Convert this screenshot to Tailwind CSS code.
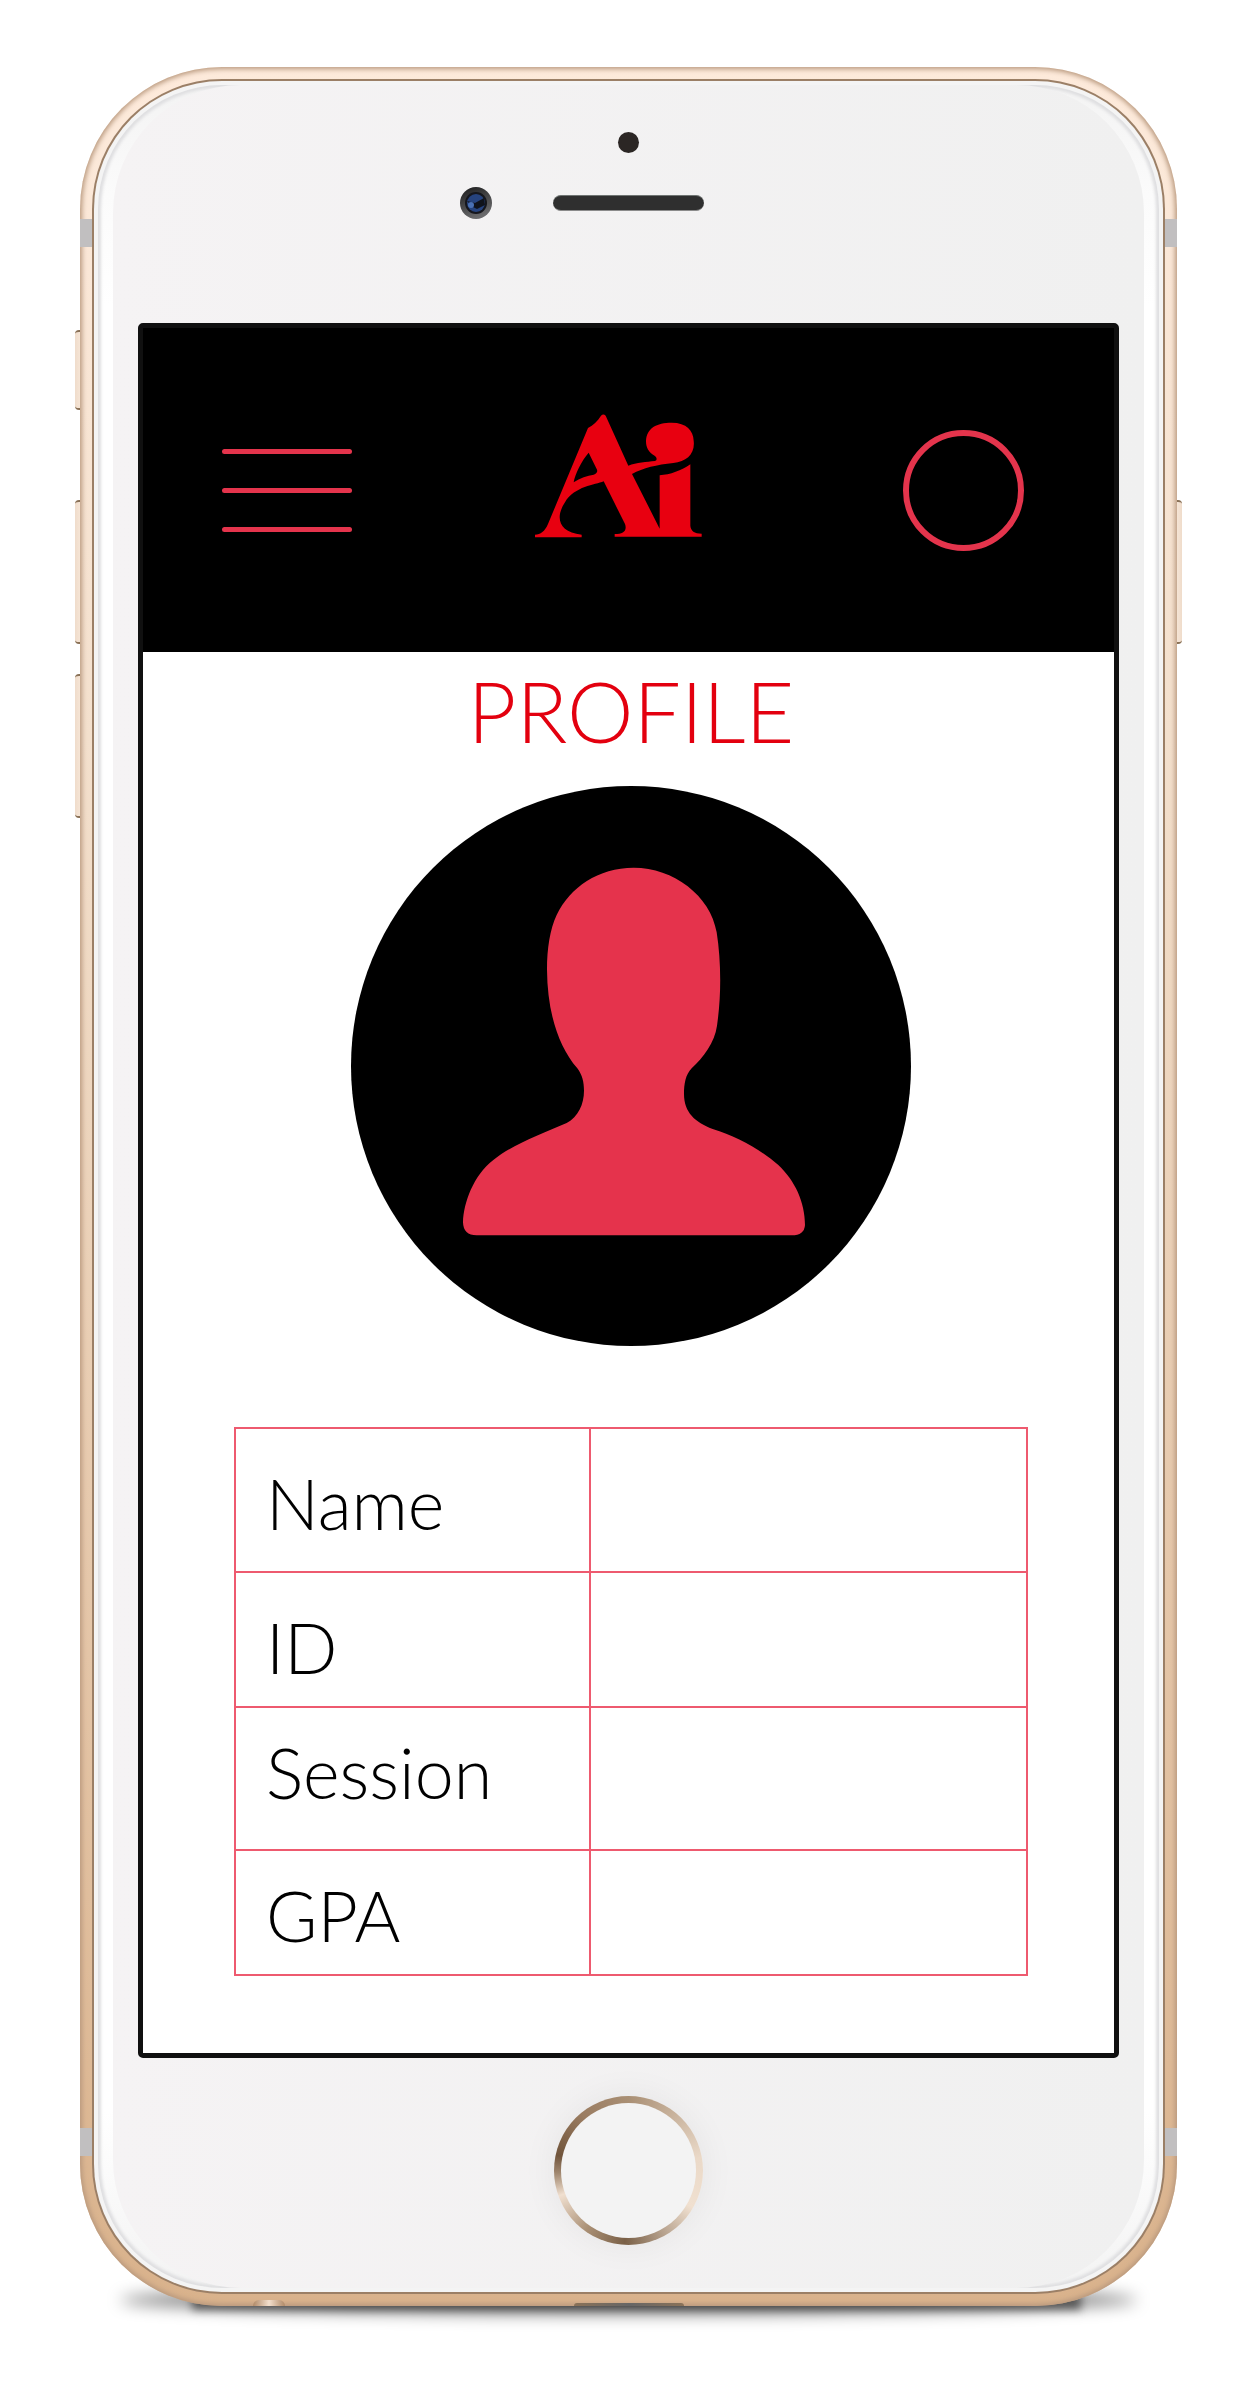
<!DOCTYPE html>
<html lang="en">
<head>
<meta charset="utf-8">
<meta name="viewport" content="width=device-width, initial-scale=1">
<title>Profile</title>
<script src="https://cdn.jsdelivr.net/npm/@tailwindcss/browser@4"></script>
</head>
<body class="bg-white font-['Lato',sans-serif] font-light text-black">
<div class="relative mt-[67px] mr-[65px] mb-[85px] ml-20">

  <!-- ground shadow -->
  <div class="absolute right-10 -bottom-2 left-10 h-7 rounded-[50%] bg-black/50 blur-[8px]"></div>
  <div class="absolute right-24 -bottom-1 left-28 h-4 bg-black/50 blur-[4px]"></div>

  <!-- side keys -->
  <div class="absolute top-[263px] -left-[5px] h-20 w-3 rounded-l-[4px] border-y-2 border-[#8a7258] bg-linear-to-r from-[#efdccb] to-[#fff1e4]"></div>
  <div class="absolute top-[433px] -left-[5px] h-36 w-3 rounded-l-[4px] border-y-2 border-[#8a7258] bg-linear-to-r from-[#efdccb] to-[#fff1e4]"></div>
  <div class="absolute top-[607px] -left-[5px] h-36 w-3 rounded-l-[4px] border-y-2 border-[#8a7258] bg-linear-to-r from-[#efdccb] to-[#fff1e4]"></div>
  <div class="absolute top-[433px] -right-[5px] h-36 w-3 rounded-r-[4px] border-y-2 border-[#8a7258] bg-linear-to-l from-[#efdccb] to-[#fff1e4]"></div>

  <!-- metal frame -->
  <div class="relative overflow-hidden rounded-[142px] bg-linear-to-b from-[#fdeadb] via-[#f3e0cd] via-30% to-[#d9b28c] p-[14px] shadow-[inset_0_0_5px_2px_#b8987d]">
    <div class="absolute top-[152px] left-0 h-7 w-full bg-[#c1bfc0]"></div>
    <div class="absolute bottom-[150px] left-0 h-7 w-full bg-[#c1bfc0]"></div>
    <div class="absolute bottom-0 left-[173px] h-[6px] w-8 rounded-t-full bg-linear-to-r from-[#b08a68] via-[#f3dfcd] to-[#b08a68]"></div>
    <div class="absolute bottom-0 left-1/2 h-[3px] w-[110px] -translate-x-1/2 rounded-t-full bg-linear-to-r from-[#8a7258] via-[#666] to-[#8a7258]"></div>

    <!-- glass -->
    <div class="relative rounded-[128px] bg-[#f4f4f4] p-1 shadow-[0_0_0_2px_#9b7f66]">
      <div class="rounded-[124px] bg-[linear-gradient(#f3f3f3,#fbfbfb_5%,#fff_10%,#fff_92%,#f6f6f6_98%,#f3f3f3)] px-[15px] shadow-[inset_0_0_3px_3px_#dfdfe1]">
        <div class="rounded-[128px] bg-linear-to-r from-[#f5f3f4] to-[#f0f0f0] px-[25px] pt-[47px] pb-[43px]">

          <div class="mx-auto size-[21px] rounded-full bg-[#2b2624]"></div>
          <div class="mt-[34px] grid grid-cols-[1fr_auto_1fr] items-center">
            <svg class="mr-[61px] size-8 justify-self-end" viewBox="0 0 32 32" aria-hidden="true">
              <defs><linearGradient id="rim" x2="0.4" y2="1"><stop stop-color="#1b1b1c"/><stop offset="1" stop-color="#6a6a6c"/></linearGradient></defs>
              <circle cx="16" cy="16" r="16" fill="url(#rim)"/>
              <circle cx="16" cy="16" r="11" fill="#15161c"/>
              <circle cx="16" cy="16" r="9" fill="#26437e"/>
              <path d="M7 14 15 16 24 11 25 18 17 22 13 20Z" fill="#10131c"/>
              <circle cx="11" cy="18" r="3" fill="#4a70b4"/>
            </svg>
            <div class="h-4 w-[151px] rounded-full border-t border-b border-t-[#6f7472] border-b-[#8b8b8b] bg-[#2f2f2f]"></div>
          </div>

          <!-- screen -->
          <div class="mt-[104px] rounded-[5px] border-[5px] border-[#101010] bg-white">
            <header class="flex h-[324px] items-center justify-between bg-black pr-[90px] pl-[79px]">
              <button type="button" aria-label="Menu" class="flex flex-col gap-[34px]">
                <span class="block h-[5px] w-[130px] rounded-full bg-[#e4344c]"></span>
                <span class="block h-[5px] w-[130px] rounded-full bg-[#e4344c]"></span>
                <span class="block h-[5px] w-[130px] rounded-full bg-[#e4344c]"></span>
              </button>
              <svg class="h-[153px] w-[185px]" viewBox="105 70 555 459" fill="#e80010" role="img" aria-label="Ai">
                <path fill-rule="evenodd" d="M105 440V432C122 431 134 423 144 400L264 112C280 104 292 92 303 75Q310 68 317 75L385 225C410 215 440 214 465 211Q475 206 465 196C445 185 438 170 438 152C439 112 470 96 515 96C560 96 580 120 581 150C586 190 560 213 520 217C470 222 430 232 396 250L479 414V254C510 252 545 240 571 221V405C572 420 583 429 605 429V438H344V430C370 430 382 420 375 400L311 272C285 283 225 286 195 335C165 380 175 425 245 432V440ZM266 186C245 210 225 250 221 275C240 262 262 255 281 252Q296 246 290 235Z"/>
              </svg>
              <button type="button" aria-label="Account" class="size-[121px] rounded-full border-[6px] border-[#e4344c]"></button>
            </header>

            <main class="pt-[17px] pr-[86px] pb-[77px] pl-[91px]">
              <h1 class="text-center text-[84px] leading-[84px] text-[#e3000f]">PROFILE</h1>
              <svg class="mx-auto mt-[33px] block size-[560px]" viewBox="-207 -159 1680 1680" role="img" aria-label="Profile picture">
                <circle cx="633" cy="681" r="840"/>
                <path fill="#e5334c" d="M641 86C760 86 872 170 890 280C904 370 904 470 891 560C884 610 850 655 815 688C797 706 792 735 792 765C792 820 825 850 878 870C950 893 1020 930 1075 978C1125 1025 1155 1090 1155 1158Q1153 1189 1115 1189H170Q130 1189 129 1150C131 1090 160 1010 220 963C280 915 360 887 440 852C475 833 492 795 492 755C492 730 487 708 472 688C415 622 382 520 381 392C381 330 390 270 410 228C450 145 535 86 641 86Z"/>
              </svg>
              <table class="mt-[81px] w-full table-fixed border-collapse text-left text-[70px] leading-[80px]">
                <colgroup><col class="w-[355px]"><col></colgroup>
                <tbody>
                  <tr class="h-36 align-top"><th scope="row" class="border-2 border-[#ee5a6f] pt-[34px] pl-[30px] font-light">Name</th><td class="border-2 border-[#ee5a6f]"></td></tr>
                  <tr class="h-[135px] align-top"><th scope="row" class="border-2 border-[#ee5a6f] pt-[34px] pl-[30px] font-light">ID</th><td class="border-2 border-[#ee5a6f]"></td></tr>
                  <tr class="h-[143px] align-top"><th scope="row" class="border-2 border-[#ee5a6f] pt-6 pl-[30px] font-light">Session</th><td class="border-2 border-[#ee5a6f]"></td></tr>
                  <tr class="h-[125px] align-top"><th scope="row" class="border-2 border-[#ee5a6f] pt-6 pl-[30px] font-light">GPA</th><td class="border-2 border-[#ee5a6f]"></td></tr>
                </tbody>
              </table>
            </main>
          </div>

          <!-- home key -->
          <button type="button" aria-label="Home" class="mx-auto mt-[38px] block size-[149px] rounded-full bg-[conic-gradient(#a98f74,#ead9c8_80deg,#f0e0d0_120deg,#7a6047_183deg,#a98f74_215deg,#f0dfcf_250deg,#a0876f_268deg,#70543b_282deg,#9a7c61_320deg,#a98f74)] p-[7px] shadow-[0_0_36px_rgba(0,0,0,0.06)]">
            <span class="block size-full rounded-full bg-[#f3f3f3]"></span>
          </button>
        </div>
      </div>
    </div>
  </div>
</div>
</body>
</html>
